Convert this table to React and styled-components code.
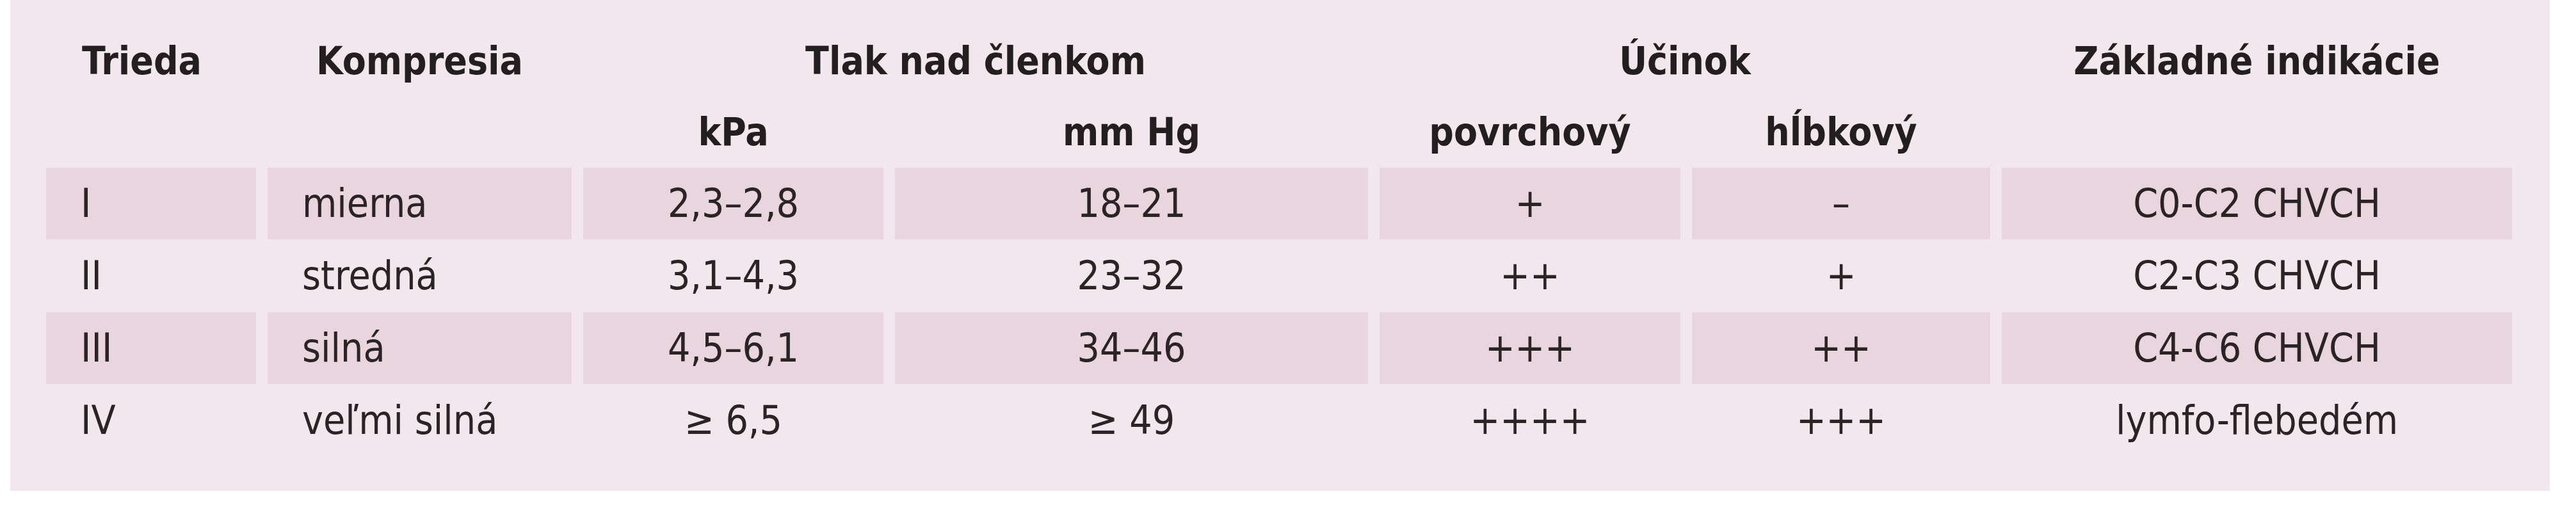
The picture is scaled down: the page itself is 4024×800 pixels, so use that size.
import React from "react";
import styled, { createGlobalStyle } from "styled-components";

const GlobalStyle = createGlobalStyle`
  html, body {
    margin: 0;
    padding: 0;
    background: #ffffff;
  }
  body {
    font-family: "DejaVu Sans Condensed", "DejaVu Sans", "Liberation Sans", sans-serif;
    font-stretch: condensed;
    color: #231f20;
  }
`;

const Panel = styled.section`
  box-sizing: border-box;
  margin-left: 16px;
  width: 3967px;
  height: 767px;
  background: #f3e7ee;
  padding: 40px 59px 54px 56px;
`;

const Grid = styled.div`
  display: grid;
  grid-template-columns: 328px 475px 469px 739px 470px 466px 797px;
  grid-template-rows: 110px 110px repeat(4, 112px);
  column-gap: 18px;
  row-gap: 1px;
`;

const Head = styled.div`
  display: flex;
  align-items: center;
  justify-content: ${(p) => (p.$align === "left" ? "flex-start" : "center")};
  padding-left: ${(p) => (p.$align === "left" ? "56px" : "0")};
  grid-column: ${(p) => (p.$span ? `span ${p.$span}` : "auto")};
  font-size: 60px;
  font-weight: 700;
  line-height: 1;
  white-space: nowrap;
  color: #231f20;
`;

const Cell = styled.div`
  display: flex;
  align-items: center;
  justify-content: ${(p) => (p.$align === "left" ? "flex-start" : "center")};
  padding-left: ${(p) => (p.$align === "left" ? "54px" : "0")};
  background: ${(p) => (p.$shaded ? "#e8d5de" : "transparent")};
  font-size: 62px;
  font-weight: 400;
  line-height: 1;
  white-space: nowrap;
  color: #2a2426;
`;

const rows = [
  ["I", "mierna", "2,3–2,8", "18–21", "+", "–", "C0-C2 CHVCH"],
  ["II", "stredná", "3,1–4,3", "23–32", "++", "+", "C2-C3 CHVCH"],
  ["III", "silná", "4,5–6,1", "34–46", "+++", "++", "C4-C6 CHVCH"],
  ["IV", "veľmi silná", "≥ 6,5", "≥ 49", "++++", "+++", "lymfo-flebedém"],
];

export default function App() {
  return (
    <>
      <GlobalStyle />
      <Panel>
        <Grid>
          <Head $align="left">Trieda</Head>
          <Head>Kompresia</Head>
          <Head $span={2}>Tlak nad členkom</Head>
          <Head $span={2}>Účinok</Head>
          <Head>Základné indikácie</Head>

          <Head />
          <Head />
          <Head>kPa</Head>
          <Head>mm Hg</Head>
          <Head>povrchový</Head>
          <Head>hĺbkový</Head>
          <Head />

          {rows.map((row, r) =>
            row.map((value, c) => (
              <Cell
                key={`${r}-${c}`}
                $shaded={r % 2 === 0}
                $align={c < 2 ? "left" : "center"}
              >
                {value}
              </Cell>
            ))
          )}
        </Grid>
      </Panel>
    </>
  );
}
